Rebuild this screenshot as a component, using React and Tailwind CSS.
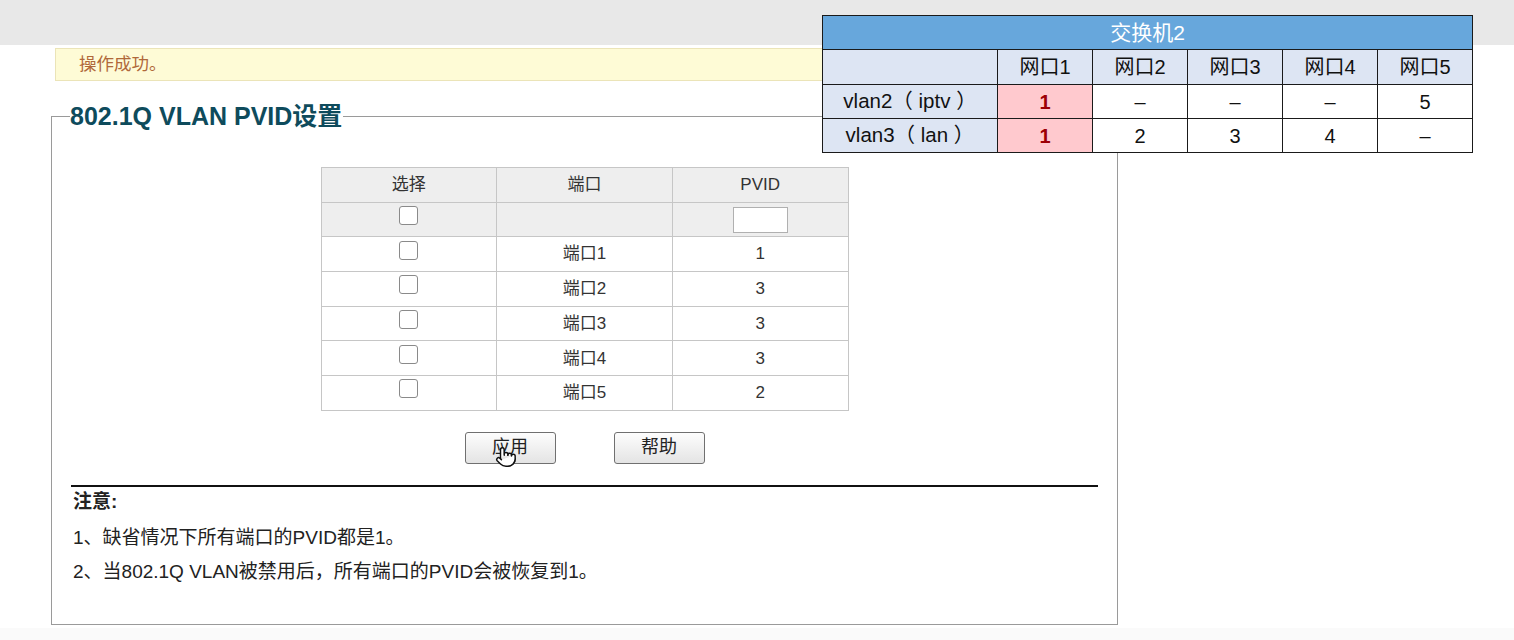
import React from "react";
import { Pointer } from "lucide-react";

const font = { fontFamily: '"Liberation Sans", "Noto Sans CJK SC", Arial, sans-serif' };

const ports = [
  ["端口1", "1"],
  ["端口2", "3"],
  ["端口3", "3"],
  ["端口4", "3"],
  ["端口5", "2"],
];

function Checkbox() {
  return <span className="inline-block w-[19px] h-[19px] mb-[8px] border border-[#8a8a8a] rounded-[3px] bg-white align-middle" />;
}

function Overlay() {
  const cols = ["网口1", "网口2", "网口3", "网口4", "网口5"];
  const rows = [
    ["vlan2（ iptv ）", ["1", "–", "–", "–", "5"]],
    ["vlan3（ lan ）", ["1", "2", "3", "4", "–"]],
  ];
  return (
    <div className="absolute left-[822px] top-[15px] w-[651px] bg-white" style={font}>
      <table className="border-collapse text-[20px] text-[#111] w-full table-fixed">
        <colgroup>
          <col className="w-[175px]" />
          <col /><col /><col /><col /><col />
        </colgroup>
        <tbody>
          <tr className="h-[34px]">
            <td colSpan={6} className="border border-[#1a1a1a] bg-[#67a7dc] text-white text-center text-[21px]">交换机2</td>
          </tr>
          <tr className="h-[35px]">
            <td className="border border-[#1a1a1a] bg-[#dde5f3]"></td>
            {cols.map((c) => (
              <td key={c} className="border border-[#1a1a1a] bg-[#dde5f3] text-center">{c}</td>
            ))}
          </tr>
          {rows.map(([label, vals]) => (
            <tr key={label} className="h-[34px]">
              <td className="border border-[#1a1a1a] bg-[#dde5f3] text-center whitespace-pre text-[20.5px]">{label}</td>
              {vals.map((v, i) => (
                <td
                  key={i}
                  className={
                    i === 0
                      ? "border border-[#1a1a1a] bg-[#ffc9ce] text-center text-[#9c0006] font-bold"
                      : "border border-[#1a1a1a] bg-white text-center"
                  }
                >
                  {v}
                </td>
              ))}
            </tr>
          ))}
        </tbody>
      </table>
    </div>
  );
}

export default function App() {
  return (
    <div className="relative w-[1514px] h-[640px] bg-white overflow-hidden" style={font}>
      <div className="h-[45px] bg-[#e8e8e8]" />
      <div className="ml-[55px] mt-[3px] w-[1063px] h-[33px] border border-[#ebe4b8] bg-[#fefbd6] flex items-center pl-[23px] text-[17.5px] text-[#b0683a]">
        操作成功。
      </div>

      <fieldset className="ml-[51px] mt-[22px] w-[1067px] h-[522px] border border-[#9a9a9a] px-[19px]">
        <legend className="ml-[-1px] pr-[1px] text-[25px] font-bold leading-[26px] text-[#0e4b5c]">
          802.1Q VLAN PVID设置
        </legend>

        <div className="flex justify-center mt-[38px]">
          <table className="border-collapse w-[528px] table-fixed text-[17px] text-[#333]">
            <tbody>
              <tr className="h-[34.7px] bg-[#eeeeee]">
                <td className="border border-[#c6c6c6] text-center">选择</td>
                <td className="border border-[#c6c6c6] text-center">端口</td>
                <td className="border border-[#c6c6c6] text-center">PVID</td>
              </tr>
              <tr className="h-[34.7px] bg-[#eeeeee]">
                <td className="border border-[#c6c6c6] text-center"><Checkbox /></td>
                <td className="border border-[#c6c6c6]"></td>
                <td className="border border-[#c6c6c6] text-center">
                  <span className="inline-block w-[55px] h-[26px] bg-white border border-[#b0b0b0] align-middle" />
                </td>
              </tr>
              {ports.map(([p, v]) => (
                <tr key={p} className="h-[34.7px] bg-white">
                  <td className="border border-[#c6c6c6] text-center"><Checkbox /></td>
                  <td className="border border-[#c6c6c6] text-center">{p}</td>
                  <td className="border border-[#c6c6c6] text-center">{v}</td>
                </tr>
              ))}
            </tbody>
          </table>
        </div>

        <div className="flex justify-center gap-[58px] mt-[21px]">
          <div className="relative">
            <button className="w-[91px] h-[32px] rounded-[3px] border border-[#707070] bg-gradient-to-b from-[#fdfdfd] to-[#e4e4e4] text-[18px] text-[#222]">
              应用
            </button>
            <Pointer className="absolute left-[30px] top-[14px] w-[22px] h-[22px]" fill="white" stroke="#111" strokeWidth={1.6} />
          </div>
          <button className="w-[91px] h-[32px] rounded-[3px] border border-[#707070] bg-gradient-to-b from-[#fdfdfd] to-[#e4e4e4] text-[18px] text-[#222]">
            帮助
          </button>
        </div>

        <div className="mt-[21px] h-[2px] bg-[#111]" />
        <div className="pl-[2px] text-[19px] text-[#222]">
          <div className="mt-[4px] font-bold leading-[22px]">注意:</div>
          <div className="mt-[14px] leading-[22px]">1、缺省情况下所有端口的PVID都是1。</div>
          <div className="mt-[12px] leading-[22px]">2、当802.1Q VLAN被禁用后，所有端口的PVID会被恢复到1。</div>
        </div>
      </fieldset>

      <div className="absolute left-0 bottom-0 w-full h-[12px] bg-[#fafafa]" />
      <Overlay />
    </div>
  );
}
